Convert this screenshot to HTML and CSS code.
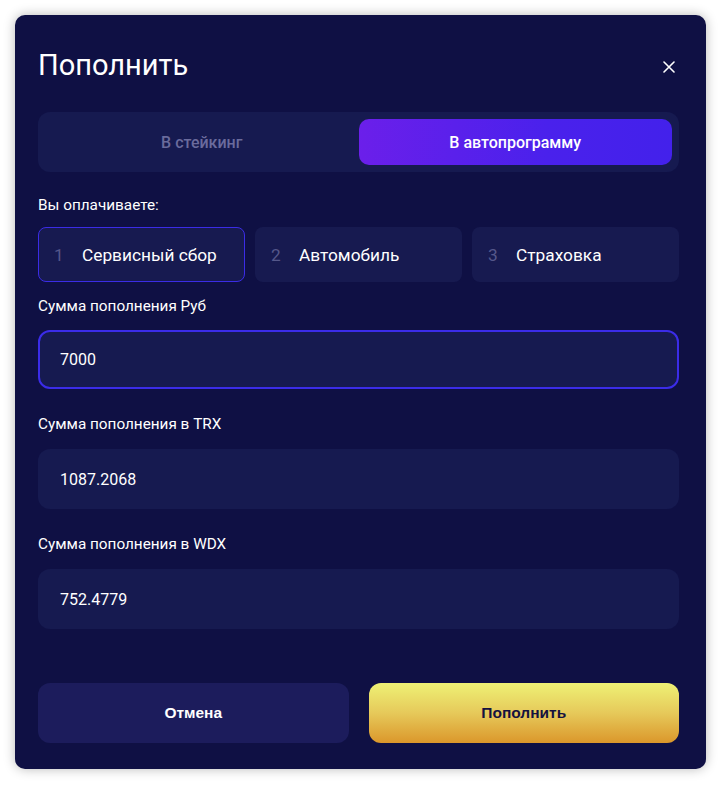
FILE: index.html
```html
<!DOCTYPE html>
<html lang="ru">
<head>
<meta charset="utf-8">
<title>Пополнить</title>
<link rel="stylesheet" href="styles.css">
</head>
<body>
<div class="modal">
  <div class="header">
    <h1 class="title">Пополнить</h1>
    <button class="close" aria-label="Закрыть">
      <svg width="12" height="12" viewBox="0 0 12 12"><path d="M1 1L11 11M11 1L1 11" stroke="#ffffff" stroke-width="1.6" stroke-linecap="round"/></svg>
    </button>
  </div>
  <div class="tabs">
    <div class="tab">В стейкинг</div>
    <div class="tab tab-active">В автопрограмму</div>
  </div>
  <div class="label label-pay">Вы оплачиваете:</div>
  <div class="steps">
    <div class="step step-active"><span class="num">1</span><span class="step-text">Сервисный сбор</span></div>
    <div class="step"><span class="num">2</span><span class="step-text">Автомобиль</span></div>
    <div class="step"><span class="num">3</span><span class="step-text">Страховка</span></div>
  </div>
  <div class="field field-first">
    <div class="label">Сумма пополнения Руб</div>
    <div class="input input-focus">7000</div>
  </div>
  <div class="field">
    <div class="label">Сумма пополнения в TRX</div>
    <div class="input">1087.2068</div>
  </div>
  <div class="field">
    <div class="label">Сумма пополнения в WDX</div>
    <div class="input">752.4779</div>
  </div>
  <div class="actions">
    <button class="btn btn-cancel">Отмена</button>
    <button class="btn btn-submit">Пополнить</button>
  </div>
</div>
</body>
</html>
```

FILE: styles.css
```css
* { box-sizing: border-box; }
html, body { margin: 0; background: #ffffff; }
body {
  padding: 15px;
  font-family: Roboto, "Noto Sans", Arial, sans-serif;
  color: #ffffff;
}
.modal {
  width: 691px;
  height: 754px;
  background: #0f1044;
  border-radius: 10px;
  box-shadow: 0 0 12px rgba(0, 0, 0, 0.28);
  padding: 34px 27px 26px 23px;
  display: flex;
  flex-direction: column;
}
.header {
  display: flex;
  justify-content: space-between;
  align-items: center;
  height: 33px;
}
.title {
  margin: 0;
  font-size: 29px;
  font-weight: 400;
  line-height: 33px;
  color: #ffffff;
}
.close {
  background: none;
  border: 0;
  padding: 0;
  width: 12px;
  height: 12px;
  margin-right: 4px;
  margin-top: 2px;
  display: flex;
  cursor: pointer;
}
.tabs {
  margin-top: 30px;
  height: 60px;
  padding: 7px;
  background: #161a50;
  border-radius: 12px;
  display: grid;
  grid-template-columns: 1fr 1fr;
}
.tab {
  display: flex;
  align-items: center;
  justify-content: center;
  font-size: 16px;
  font-weight: 500;
  color: #6a6b9c;
  border-radius: 10px;
}
.tab-active {
  color: #ffffff;
  background: linear-gradient(90deg, #6b1fea 0%, #4a21ec 60%, #4321eb 100%);
}
.label {
  font-size: 15.3px;
  line-height: 16px;
  color: #ffffff;
}
.label-pay { margin-top: 25px; }
.steps {
  margin-top: 14px;
  display: grid;
  grid-template-columns: repeat(3, 1fr);
  gap: 10px;
}
.step {
  height: 55px;
  background: #171a50;
  border: 1px solid transparent;
  border-radius: 8px;
  display: flex;
  align-items: center;
  padding-left: 15px;
  font-size: 17.3px;
}
.step-active { border-color: #3b2ce6; }
.num {
  width: 28px;
  color: #55578a;
}
.step-text { color: #ffffff; }
.field { margin-top: 27px; }
.field-first { margin-top: 16px; }
.input {
  margin-top: 17px;
  height: 60px;
  background: #161a50;
  border: 2px solid transparent;
  border-radius: 12px;
  display: flex;
  align-items: center;
  padding-left: 20px;
  font-size: 16px;
  color: #ffffff;
}
.field-first .input { margin-top: 16px; height: 59px; }
.input-focus { border-color: #3b2ce8; }
.actions {
  margin-top: auto;
  display: grid;
  grid-template-columns: 1fr 1fr;
  gap: 20px;
}
.btn {
  height: 60px;
  border: 0;
  border-radius: 12px;
  font-family: "Liberation Sans", Arial, sans-serif;
  font-weight: 700;
  font-size: 15.5px;
  cursor: pointer;
}
.btn-cancel {
  background: #1c1c5c;
  color: #ffffff;
}
.btn-submit {
  background: linear-gradient(180deg, #eef175 0%, #e6c95a 50%, #db972b 100%);
  color: #15123f;
}
```
